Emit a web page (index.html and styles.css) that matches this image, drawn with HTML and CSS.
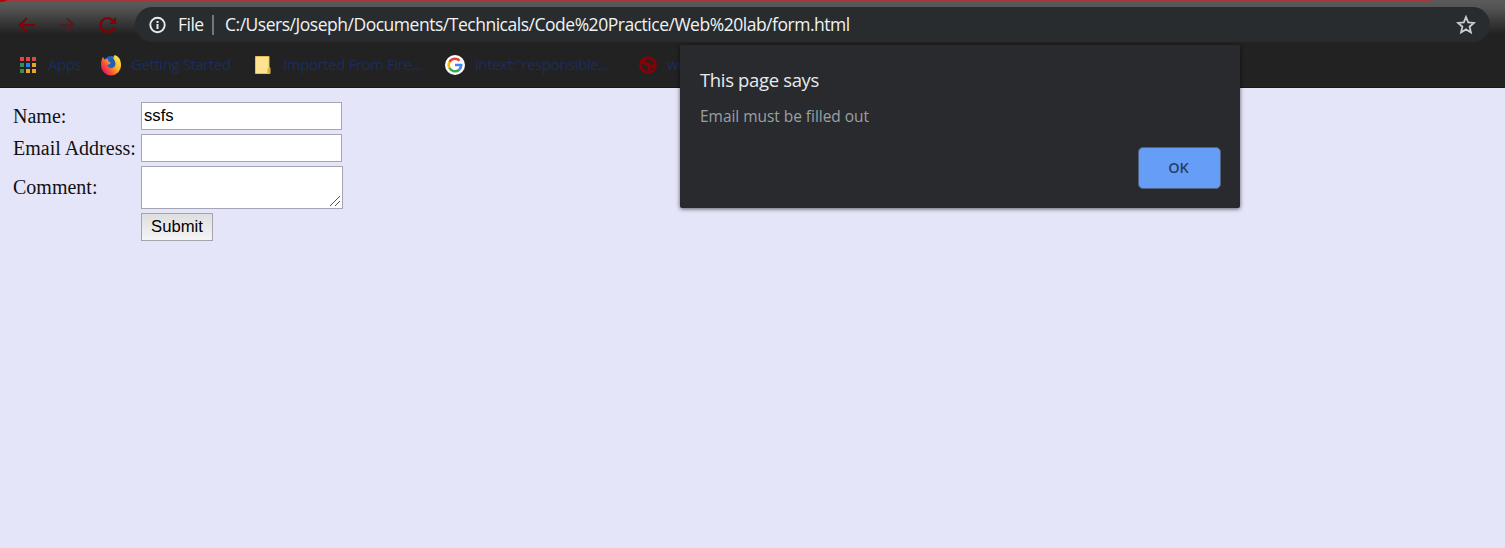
FILE: index.html
```html
<!DOCTYPE html>
<html lang="en">
<head>
<meta charset="utf-8">
<title>form.html</title>
<link rel="stylesheet" href="styles.css">
</head>
<body>
<header class="browser">
  <svg class="tab-edge" viewBox="0 0 1505 7" width="1505" height="7" aria-hidden="true"><path d="M0 0H1432L1429 2H7Q5 2 0 2Z" fill="#a4373b"/><path d="M0 0H7Q5 2 0 2Z" fill="#c00000"/></svg>
  <div class="toolbar">
    <nav class="nav">
      <svg width="18" height="18" viewBox="0 0 18 18" fill="none" stroke="#850006" stroke-width="2"><path d="M17 9H2.500M9 2L2 9l7 7"/></svg>
      <svg width="18" height="18" viewBox="0 0 18 18" fill="none" stroke="#551b1e" stroke-width="2"><path d="M1 9h13.500M9 2.500l6.500 6.500L9 15.500"/></svg>
      <svg width="20" height="18" viewBox="0 0 20 18" fill="none" stroke="#850006" stroke-width="2.400"><path d="M16 11.500A7 6.800 0 1 1 14.800 4.500"/><path d="M18 1v7h-7z" fill="#850006" stroke="none"/></svg>
    </nav>
    <div class="address">
      <svg class="info" width="18" height="18" viewBox="0 0 18 18"><circle cx="9.500" cy="9" r="7.200" fill="none" stroke="#e8eaed" stroke-width="1.900"/><path d="M8.500 8h2v5h-2zM8.500 5h2v2h-2z" fill="#e8eaed"/></svg>
      <span class="scheme">File</span>
      <span class="divider"></span>
      <span class="url">C:/Users/Joseph/Documents/Technicals/Code%20Practice/Web%20lab/form.html</span>
      <svg class="star" width="20" height="20" viewBox="0 0 20 20"><path d="M10 2l2.200 5.400 5.800.5-4.400 3.800 1.300 5.700-4.900-3-4.900 3 1.300-5.700L2 7.900l5.800-.5z" fill="none" stroke="#c9ced4" stroke-width="1.800"/></svg>
    </div>
  </div>
  <div class="bookmarks">
    <svg class="icon" width="20" height="20" viewBox="0 0 20 20"><path d="M2 2h4v4H2zM8 2h4v4H8zM14 2h4v4h-4z" fill="#e04743"/><path d="M2 8h4v4H2zM2 14h4v4H2z" fill="#3c8c5a"/><path d="M8 8h4v4H8z" fill="#1d83f5"/><path d="M14 8h4v4h-4zM8 14h4v4H8zM14 14h4v4h-4z" fill="#e4a72a"/></svg>
    <span class="label apps">Apps</span>
    <svg class="icon" width="22" height="22" viewBox="0 0 22 22">
      <defs><linearGradient id="fire" x1=".9" y1=".2" x2=".15" y2=".8"><stop offset="0" stop-color="#ffe14a"/><stop offset=".4" stop-color="#ffad22"/><stop offset=".75" stop-color="#fa5035"/><stop offset="1" stop-color="#e7205f"/></linearGradient></defs>
      <circle cx="11.500" cy="10" r="8" fill="#2766c8"/>
      <path d="M3 3L4.500 5.500l3-.5 1 2.500 2.500.5-1 2-3 1c1 4 6 4 8 1 1.300-3 0-5-2-7L14.500 1C20 3 21 7 21 11.500a10 10 0 0 1-20 0C1 8 1.500 5 3 3Z" fill="url(#fire)"/>
      <path d="M8 4l2-1 4 2 1 5-2 3-4-.5 2-2.500-1-2Z" fill="#1e5fb5"/>
    </svg>
    <span class="label started">Getting Started</span>
    <svg class="icon" width="20" height="20" viewBox="0 0 20 20"><path d="M2.500 1.500H16V12l1 1v5.500H2.500z" fill="#ffe391" stroke="#e3bd56"/><path d="M14.500 18v-4l1.500-2 1 1v5z" fill="#dfaf35"/></svg>
    <span class="label imported">Imported From Fire...</span>
    <svg class="icon google" width="22" height="22" viewBox="0 0 22 22"><circle cx="11" cy="11" r="10" fill="#fff"/><g fill="none" stroke-width="2.600"><path d="M15.600 6.700A6.300 6.300 0 0 0 5.500 8" stroke="#ea4335"/><path d="M5.500 8a6.300 6.300 0 0 0 0 6" stroke="#fbbc05"/><path d="M5.500 14a6.300 6.300 0 0 0 9.700 1.700" stroke="#34a853"/><path d="M15.200 15.700a6.300 6.300 0 0 0 2-4.700H11" stroke="#4285f4"/></g></svg>
    <span class="label intext">intext:"responsible...</span>
    <svg class="icon" width="20" height="20" viewBox="0 0 20 20"><circle cx="10" cy="10" r="8.800" fill="#8b0006"/><path d="M9 3.500c3-.5 6 1 7 4.500l-1.500 2-3-.5-1-2-3-.5zM3.500 9l4 .5 3 2.500-1 2 1 2.500c-4 0-7-3-7-7.500zM13 13l3-1-2 3.500-2 .5z" fill="#2b1f20"/></svg>
    <span class="label">we</span>
  </div>
</header>

<main class="page">
  <form class="form">
    <label for="name">Name:</label><input id="name" class="field" type="text" value="ssfs">
    <label for="email">Email Address:</label><input id="email" class="field" type="text">
    <label for="comment">Comment:</label>
    <div class="comment-box">
      <textarea id="comment" class="field comment"></textarea>
      <svg class="grip" width="12" height="12" viewBox="0 0 12 12" aria-hidden="true"><path d="M1 11L11 1M6 11l5-5" stroke="#555" stroke-width="1"/></svg>
    </div>
    <button class="submit" type="button">Submit</button>
  </form>
</main>

<section class="dialog" role="alertdialog">
  <h1 class="dialog-title">This page says</h1>
  <p class="dialog-text">Email must be filled out</p>
  <button class="ok" type="button">OK</button>
</section>
</body>
</html>
```
FILE: styles.css
```css
* { box-sizing: border-box; }
body {
  margin: 0;
  height: 548px;
  overflow: hidden;
  background: #e5e5fa;
  font-family: "Open Sans", "Noto Sans", sans-serif;
}
svg { display: block; flex: none; }
.browser {
  position: relative;
  height: 88px;
  padding-top: 7px;
  background: linear-gradient(#5b5b5b 0, #555 7px, #222 34px, #222 100%);
  border-bottom: 1px solid #18181b;
}
.tab-edge { position: absolute; top: 0; left: 0; }
.toolbar { display: flex; height: 35px; padding-right: 15px; }
.nav { display: flex; align-items: center; width: 135px; padding-left: 18px; gap: 22px; flex: none; }
.address {
  display: flex;
  align-items: center;
  flex: 1;
  height: 35px;
  padding: 0 14px 0 13px;
  border-radius: 18px;
  background: #282c2f;
  color: #f1f3f4;
  font-size: 17.500px;
  white-space: nowrap;
}
.scheme { width: 26px; margin-left: 12px; padding-bottom: 2px; letter-spacing: -.5px; }
.divider { width: 2px; height: 20px; margin: 0 11px 0 8px; background: #73777a; }
.url { padding-bottom: 2px; letter-spacing: -.48px; }
.star { margin-left: auto; }
.bookmarks {
  display: grid;
  grid-template-columns: 28px 54px 31px 122px 30px 161px 31px 163px 29px 40px;
  align-items: center;
  height: 46px;
  padding-left: 18px;
  color: #1b2c5d;
  font-size: 15px;
  letter-spacing: -.42px;
  white-space: nowrap;
}
.label { padding-bottom: 2px; }
.apps { padding-left: 2px; }
.page { padding: 14px 13px; }
.form {
  display: grid;
  grid-template-columns: 128px 202px;
  grid-template-rows: 28px 28px 43px 28px;
  row-gap: 4px;
  align-items: center;
  color: #111;
  font: 20px "Liberation Serif", serif;
}
.field {
  display: block;
  width: 201px;
  height: 28px;
  margin: 0;
  padding: 1px 2px;
  border: 1px solid #a5a5b3;
  border-radius: 0;
  background: #fff;
  color: #000;
  font: 16.670px "Liberation Sans", sans-serif;
}
.comment-box { position: relative; }
.comment { width: 202px; height: 43px; resize: none; overflow: hidden; }
.grip { position: absolute; right: 2px; bottom: 2px; }
.submit {
  grid-column: 2;
  width: 72px;
  height: 28px;
  padding: 0;
  border: 1px solid #a4a4ac;
  border-radius: 0;
  background: linear-gradient(#dedede, #f5f5f5);
  color: #000;
  font: 16.670px "Liberation Sans", sans-serif;
}
.dialog {
  position: absolute;
  top: 45px;
  left: 680px;
  display: flex;
  flex-direction: column;
  width: 560px;
  height: 163px;
  padding: 21px 19px 19px 20px;
  border-radius: 2px;
  background: #292a2d;
  box-shadow: 0 1px 4px #00000099;
}
.dialog-title { margin: 0; color: #e8eaed; font-size: 18.500px; font-weight: 400; line-height: 27px; letter-spacing: -.35px; }
.dialog-text { margin: 11px 0 0; color: #9aa0a6; font-size: 15.500px; line-height: 24px; letter-spacing: -.04px; }
.ok {
  align-self: flex-end;
  width: 83px;
  height: 42px;
  margin-top: auto;
  padding: 0 2px 2px 0;
  border: 1px solid #50627f;
  border-radius: 5px;
  background: #669df6;
  color: #263f68;
  font: 600 14.500px "Open Sans", sans-serif;
}
```
